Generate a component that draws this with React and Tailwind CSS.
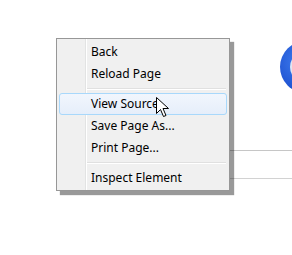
import React from "react";

function Item({ label, active }) {
  return (
    <div
      className={
        "mx-[2px] h-[22px] rounded-[3px] border pl-[31px] flex items-center " +
        (active
          ? "border-[#a8d8fb] bg-gradient-to-b from-[#f1f6fd] to-[#e6eefa]"
          : "border-transparent")
      }
    >
      <span className="text-[12px] leading-none text-black">{label}</span>
    </div>
  );
}

function Sep() {
  return (
    <div className="h-[8px] flex flex-col justify-center pl-[30px] pr-[3px]">
      <div className="h-px bg-[#e0e0e0]" />
      <div className="h-px bg-white" />
    </div>
  );
}

export default function App() {
  return (
    <div
      className="relative w-[292px] h-[255px] bg-white overflow-hidden flex flex-col"
      style={{ fontFamily: '"Segoe UI", "Noto Sans", "Open Sans", sans-serif' }}
    >
      {/* page background content */}
      <div className="self-end mt-[41px] mr-[-40px] w-[52px] h-[52px] shrink-0">
        <svg width="52" height="52" viewBox="0 0 52 52">
          <defs>
            <radialGradient id="g" cx="0.4" cy="0.4" r="0.7">
              <stop offset="0" stopColor="#3f7ef0" />
              <stop offset="1" stopColor="#1747c9" />
            </radialGradient>
          </defs>
          <circle cx="26" cy="26" r="26" fill="url(#g)" />
          <circle cx="26" cy="26" r="16" fill="#dfe6f2" />
          <circle cx="26" cy="26" r="12" fill="#2b63de" />
        </svg>
      </div>
      <div className="mt-[57px] ml-[200px] h-px bg-[#c6c6c6] shrink-0" />
      <div className="mt-[27px] ml-[200px] h-px bg-[#d2d2d2] shrink-0" />

      {/* context menu */}
      <div className="absolute left-[56px] top-[38px] w-[174px] h-[153px] border border-[#979797] bg-[#f0f0f0] shadow-[4px_4px_1px_rgba(0,0,0,0.4)] pt-[2px]">
        <div className="absolute left-[28px] top-0 bottom-0 w-px bg-[#e2e3e3]" />
        <div className="absolute left-[29px] top-0 bottom-0 w-px bg-white" />
        <div className="relative">
          <Item label="Back" />
          <Item label="Reload Page" />
          <Sep />
          <Item label="View Source" active />
          <Item label="Save Page As..." />
          <Item label="Print Page..." />
          <Sep />
          <Item label="Inspect Element" />
        </div>
      </div>

      {/* mouse cursor */}
      <svg className="absolute left-[156px] top-[97px]" width="14" height="22" viewBox="0 0 14 22">
        <path
          d="M0.5 0.5 L0.5 16.5 L4.5 12.5 L7.5 19.5 L10 18.5 L7 11.5 L12.5 11.5 Z"
          fill="white"
          stroke="black"
          strokeWidth="1"
          strokeLinejoin="miter"
        />
      </svg>
    </div>
  );
}
